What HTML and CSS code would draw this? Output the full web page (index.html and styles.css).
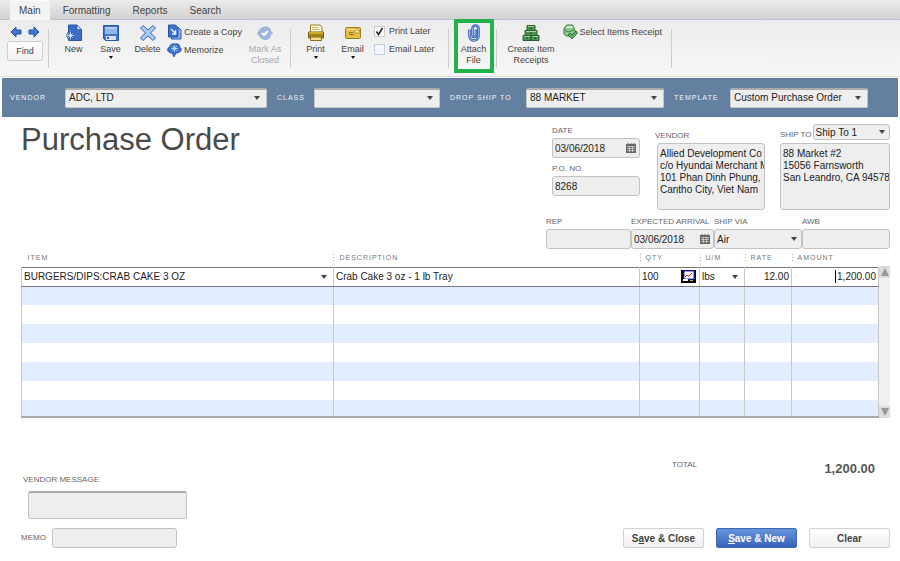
FILE: index.html
```html
<!DOCTYPE html>
<html lang="en">

<head>
    <meta charset="UTF-8">
    <meta name="viewport" content="width=device-width, initial-scale=1.0">
    <title>Purchase Order</title>
    <link rel="stylesheet" href="styles.css">
</head>

<body>

    <nav class="tabs">
        <button class="tab active" type="button">Main</button>
        <button class="tab" type="button">Formatting</button>
        <button class="tab" type="button">Reports</button>
        <button class="tab" type="button">Search</button>
    </nav>

    <div class="ribbon">

        <div class="find-group">
            <div class="arrows">
                <button class="arrow" type="button" aria-label="Previous">
                    <svg width="12" height="12" viewBox="0 0 12 12"><path d="M1 6 6 1v3h5v4H6v3z" fill="#3f78cc" stroke="#2450a0" stroke-linejoin="round"/></svg>
                </button>
                <button class="arrow" type="button" aria-label="Next">
                    <svg width="12" height="12" viewBox="0 0 12 12"><path d="M11 6 6 1v3H1v4h5v3z" fill="#3f78cc" stroke="#2450a0" stroke-linejoin="round"/></svg>
                </button>
            </div>
            <button class="find" type="button">Find</button>
        </div>

        <div class="divider"></div>

        <button class="tool" type="button">
            <svg width="18" height="18" viewBox="0 0 18 18">
                <path d="M3.500 1h8.500l4.500 4.500v11h-13z" fill="#3a6cc8" stroke="#2a56a8"/>
                <path d="M12 1v4.500h4.500z" fill="#c9dcf7" stroke="#2a56a8" stroke-width=".6"/>
                <path d="M5.500 7v9M1 11.500h9M2.500 8.500l6 6M8.500 8.500l-6 6" stroke="#2a56a8" stroke-width="2"/>
                <path d="M5.500 7.500v8M1.500 11.500h8M3 9l5 5M8 9l-5 5" stroke="#b9d7fb"/>
            </svg>
            New
        </button>
        <button class="tool" type="button">
            <svg width="18" height="18" viewBox="0 0 18 18">
                <path d="M1.500 1.500h15v15h-13l-2-2z" fill="#3c74d0" stroke="#2a56a8"/>
                <path d="M3 3h12v7H3z" fill="#8fb6ee"/>
                <path d="M3 3h12v2H3z" fill="#b3cff6"/>
                <path d="M4 12h10v4H4z" fill="#d6e5fa"/>
                <path d="M5 13h2v2H5z" fill="#2a56a8"/>
            </svg>
            Save
            <span class="caret"></span>
        </button>
        <button class="tool" type="button">
            <svg width="18" height="18" viewBox="0 0 18 18"><path d="M4 1.500 9 6l5-4.500L16.500 4l-5 5 5 5-2.500 2.500L9 12l-5 4.500L1.500 14l5-5-5-5z" fill="#a9c9f5" stroke="#3a62b4" stroke-linejoin="round"/></svg>
            Delete
        </button>

        <div class="stack">
            <button class="row-tool" type="button">
                <svg width="15" height="16" viewBox="0 0 15 16">
                    <path d="M4.500 3.500h7l2.500 2.500v9H4.500z" fill="#8fb5ee" stroke="#2a56a8"/>
                    <path d="M1.500 1h7L11 3.500V13H1.500z" fill="#3a72cc" stroke="#2a56a8"/>
                    <path d="m4 5 4 4M8.500 6v4H5" fill="none" stroke="#e4effd" stroke-width="1.500"/>
                </svg>
                Create a Copy
            </button>
            <button class="row-tool" type="button">
                <svg width="15" height="16" viewBox="0 0 15 16">
                    <path d="M2 10C0 9 0 6 2.500 5 3 2 6 1 8 2c3-1 5 1 5 3.500 2 1 1.500 4-.5 4.500-1 1-2.500 1-3.500 1L7 15l-2-4C4 11 2.500 11 2 10z" fill="#3a72cc" stroke="#2a56a8" stroke-width=".8"/>
                    <path d="M7.500 3v7M4 6.500h7M5 4l5 5M10 4 5 9" stroke="#cfe2fc" stroke-width=".8"/>
                </svg>
                Memorize
            </button>
        </div>

        <button class="tool" type="button" disabled>
            <svg width="18" height="18" viewBox="0 0 18 18">
                <path d="M1 9c2-2 3-6 8-6.500C13 2 15 5 15 7l2 2-2 2c0 3-3 5-6 5-4 0-6-4-8-7z" fill="#9db6e0"/>
                <path d="m6 9 2 2 4-4" fill="none" stroke="#fff" stroke-width="2"/>
            </svg>
            Mark As<br>Closed
        </button>

        <div class="divider"></div>

        <button class="tool" type="button">
            <svg width="18" height="18" viewBox="0 0 18 18">
                <path d="M3.500 1h9.500l2 2v6H3.500z" fill="#fffbe6" stroke="#9a7c1c"/>
                <path d="M5 3.500h6M5 5.500h7" stroke="#c6b36a"/>
                <path d="M1.500 8h15v6h-15z" fill="#a37f18" stroke="#7c5f10"/>
                <path d="M2 8h14v2H2z" fill="#d0ac3a"/>
                <path d="M3.500 13h11v3.500h-11z" fill="#f1dd8c" stroke="#8f701a"/>
            </svg>
            Print
            <span class="caret"></span>
        </button>
        <button class="tool" type="button">
            <svg width="18" height="18" viewBox="0 0 18 18">
                <rect x="1.500" y="3.500" width="15" height="11" rx="1" fill="#e3bd45" stroke="#a07d1c"/>
                <path d="M3 5h11v1H3z" fill="#f7e29a"/>
                <path d="M11 6h4v3h-4z" fill="#fff3bd" stroke="#a07d1c" stroke-width=".7"/>
                <path d="M5 8.500h4M5 10.500h5" stroke="#96741a"/>
            </svg>
            Email
            <span class="caret"></span>
        </button>

        <div class="checks">
            <label class="check"><input type="checkbox" checked> Print Later</label>
            <label class="check"><input type="checkbox"> Email Later</label>
        </div>

        <div class="divider"></div>

        <button class="tool attach" type="button">
            <svg width="18" height="18" viewBox="0 0 18 18">
                <path d="M4.500 5.500V12c0 6 9 6 9 0V4.500c0-4-6-4-6 0V11c0 2.500 3.500 2.500 3.500 0V5.500" fill="none" stroke="#2f5cae" stroke-width="2.600"/>
                <path d="M4.500 5.500V12c0 6 9 6 9 0V4.500c0-4-6-4-6 0V11c0 2.500 3.500 2.500 3.500 0V5.500" fill="none" stroke="#8fb8f2"/>
            </svg>
            Attach<br>File
        </button>

        <div class="divider"></div>

        <button class="tool receipts" type="button">
            <svg width="18" height="18" viewBox="0 0 18 18">
                <path d="M5 1.500h8v5H5zM3 6.500h12v5H3zM1 11.500h8v5H1zM9 11.500h8v5H9z" fill="#4c9153" stroke="#28602e"/>
                <path d="M6 2h6v1H6zM4 7h10v1H4zM2 12h6v1H2zM10 12h6v1h-6z" fill="#a5d6a4"/>
                <path d="M8 3h2v2H8zM8 8h2v2H8zM4 13h2v2H4zM12 13h2v2h-2z" fill="#2c6a33"/>
            </svg>
            Create Item<br>Receipts
        </button>

        <div class="stack last">
            <button class="row-tool" type="button">
                <svg width="15" height="16" viewBox="0 0 15 16">
                    <path d="M3.500 1h6L11 4l1 2v6H3l-2-2V5z" fill="#8ccb8e" stroke="#3c7d42"/>
                    <path d="M4 2h5l1 2H3z" fill="#d3efd0"/>
                    <path d="m1 5 4 3 6-2" fill="none" stroke="#3c7d42"/>
                    <path d="m5 11 2-2 2 2 4-4 1.500 2L9 15z" fill="#5fae64" stroke="#2c6a33" stroke-width=".9"/>
                </svg>
                Select Items Receipt
            </button>
        </div>

        <div class="divider"></div>

    </div>

    <div class="order-bar">
        <label for="vendor">VENDOR</label>
        <select id="vendor" class="select"><option>ADC, LTD</option></select>
        <label for="class">CLASS</label>
        <select id="class" class="select"><option></option></select>
        <label for="drop">DROP SHIP TO</label>
        <select id="drop" class="select"><option>88 MARKET</option></select>
        <label for="template">TEMPLATE</label>
        <select id="template" class="select"><option>Custom Purchase Order</option></select>
    </div>

    <main class="order">

        <div class="order-head">
            <h1>Purchase Order</h1>

            <div class="date-col">
                <label class="label" for="date">DATE</label>
                <div class="date-field">
                    <input id="date" class="field" type="text" value="03/06/2018">
                    <svg class="calendar" width="10" height="10" viewBox="0 0 10 10"><path d="M0 1h10v9H0z" fill="#666"/><path d="M2 0v2M5 0v2M8 0v2" stroke="#666"/><path d="M1 3.500h8M1 5.500h8M1 7.500h8M3.500 3v6M6.500 3v6" stroke="#ddd" stroke-width=".7"/></svg>
                </div>
                <label class="label" for="po">P.O. NO.</label>
                <input id="po" class="field" type="text" value="8268">
            </div>

            <div class="vendor-col">
                <label class="label" for="vendor-address">VENDOR</label>
                <textarea id="vendor-address" class="field address" wrap="off">Allied Development Co
c/o Hyundai Merchant M
101 Phan Dinh Phung,
Cantho City, Viet Nam</textarea>
            </div>

            <div class="ship-col">
                <div class="ship-top">
                    <label class="label" for="ship">SHIP TO</label>
                    <select id="ship" class="select flat"><option>Ship To 1</option></select>
                </div>
                <textarea class="field address" wrap="off" aria-label="Ship to address">88 Market #2
15056 Farnsworth
San Leandro, CA 94578</textarea>
            </div>
        </div>

        <div class="shipping">
            <div>
                <label class="label" for="rep">REP</label>
                <input id="rep" class="field" type="text">
            </div>
            <div>
                <label class="label" for="arrival">EXPECTED ARRIVAL</label>
                <div class="date-field">
                    <input id="arrival" class="field" type="text" value="03/06/2018">
                    <svg class="calendar" width="10" height="10" viewBox="0 0 10 10"><path d="M0 1h10v9H0z" fill="#666"/><path d="M2 0v2M5 0v2M8 0v2" stroke="#666"/><path d="M1 3.500h8M1 5.500h8M1 7.500h8M3.500 3v6M6.500 3v6" stroke="#ddd" stroke-width=".7"/></svg>
                </div>
            </div>
            <div>
                <label class="label" for="via">SHIP VIA</label>
                <select id="via" class="select flat"><option>Air</option></select>
            </div>
            <div>
                <label class="label" for="awb">AWB</label>
                <input id="awb" class="field" type="text">
            </div>
        </div>

        <div class="items-wrap">
            <table class="items">
                <colgroup>
                    <col class="c-item"><col><col class="c-qty"><col class="c-um"><col class="c-rate"><col class="c-amount">
                </colgroup>
                <thead>
                    <tr>
                        <th>ITEM</th>
                        <th>DESCRIPTION</th>
                        <th>QTY</th>
                        <th>U/M</th>
                        <th>RATE</th>
                        <th>AMOUNT</th>
                    </tr>
                </thead>
                <tbody>
                    <tr class="current">
                        <td><select class="cell" aria-label="Item"><option>BURGERS/DIPS:CRAB CAKE 3 OZ</option></select></td>
                        <td><input class="cell" type="text" value="Crab Cake 3 oz - 1 lb Tray" aria-label="Description"></td>
                        <td>
                            <div class="qty">
                                <input class="cell" type="text" value="100" aria-label="Quantity">
                                <button class="chart" type="button" aria-label="Availability">
                                    <svg width="15" height="13" viewBox="0 0 15 13"><path d="M0 0h15v13H0z"/><path d="M3 1h10v8H3z" fill="#fff" stroke="#2433d8"/><path d="m4 7 2-2 2 1 3-3" fill="none" stroke="#e02020"/><path d="M2 9h5v2H2z" fill="#fff"/><path d="M9 10h3v1H9z" fill="#d8c020"/></svg>
                                </button>
                            </div>
                        </td>
                        <td><select class="cell" aria-label="Unit"><option>lbs</option></select></td>
                        <td><input class="cell number" type="text" value="12.00" aria-label="Rate"></td>
                        <td>
                            <div class="amount">
                                <span class="cursor"></span>
                                <input class="cell number" type="text" value="1,200.00" aria-label="Amount">
                            </div>
                        </td>
                    </tr>
                    <tr><td></td><td></td><td></td><td></td><td></td><td></td></tr>
                    <tr><td></td><td></td><td></td><td></td><td></td><td></td></tr>
                    <tr><td></td><td></td><td></td><td></td><td></td><td></td></tr>
                    <tr><td></td><td></td><td></td><td></td><td></td><td></td></tr>
                    <tr><td></td><td></td><td></td><td></td><td></td><td></td></tr>
                    <tr><td></td><td></td><td></td><td></td><td></td><td></td></tr>
                    <tr class="last"><td></td><td></td><td></td><td></td><td></td><td></td></tr>
                </tbody>
            </table>
            <div class="scrollbar">
                <button type="button" aria-label="Scroll up"><svg width="8" height="8" viewBox="0 0 8 8"><path d="M4 0l4 8H0z" fill="#999"/></svg></button>
                <button type="button" aria-label="Scroll down"><svg width="8" height="8" viewBox="0 0 8 8"><path d="M4 8l4-8H0z" fill="#999"/></svg></button>
            </div>
        </div>

        <div class="order-foot">
            <div class="notes">
                <label class="label message-label" for="message">VENDOR MESSAGE</label>
                <textarea id="message" class="field message"></textarea>
                <div class="memo">
                    <label class="label" for="memo">MEMO</label>
                    <input id="memo" class="field" type="text">
                </div>
            </div>
            <div class="summary">
                <div class="total">
                    <span class="label">TOTAL</span>
                    <strong>1,200.00</strong>
                </div>
                <div class="actions">
                    <button class="btn" type="button">S<u>a</u>ve &amp; Close</button>
                    <button class="btn primary" type="button"><u>S</u>ave &amp; New</button>
                    <button class="btn" type="button">Clear</button>
                </div>
            </div>
        </div>

    </main>

</body>

</html>
```
FILE: styles.css
```css
* {
    box-sizing: border-box;
}

body {
    margin: 0;
    background: #fff;
    color: #222;
    font-family: "Liberation Sans", Arial, sans-serif;
    font-size: 10px;
}

button, input, select, textarea {
    margin: 0;
    padding: 0;
    border: 0;
    background: none;
    color: inherit;
    font: inherit;
}

svg {
    display: block;
    flex: none;
}

/* tabs */

.tabs {
    display: flex;
    gap: 4px;
    height: 20px;
    padding-left: 10px;
    background: linear-gradient(#ececec, #d2d2d2);
    border-bottom: 1px solid #bcc5d6;
}

.tab {
    height: 20px;
    padding: 0 9px;
    border: 1px solid transparent;
    border-width: 1px 0 0;
    color: #444;
}

.tab.active {
    background: #f3f3f3;
    border-color: #fafafa;
    border-radius: 3px 3px 0 0;
}

/* ribbon */

.ribbon {
    display: flex;
    align-items: flex-start;
    height: 57px;
    margin-bottom: 1px;
    padding: 4px 7px 0;
    background: linear-gradient(#ececec, #f7f7f7);
    border-bottom: 1px solid #dcdcdc;
    color: #444;
    font-size: 9px;
    line-height: 11px;
}

.find-group {
    width: 36px;
}

.arrows {
    display: flex;
    justify-content: space-between;
    padding: 2px 3px 3px;
}

.find {
    width: 36px;
    height: 20px;
    background: linear-gradient(#fff, #f0f0f0);
    border: 1px solid #cfcfcf;
    border-radius: 2px;
}

.divider {
    width: 1px;
    height: 39px;
    margin: 5px 6px 0 5px;
    background: #cdcdcd;
}

.tool {
    display: flex;
    flex-direction: column;
    align-items: center;
    min-width: 37px;
    line-height: 11px;
}

.tool svg {
    margin-bottom: 2px;
}

.tool:disabled {
    min-width: 40px;
    color: #a8a8a8;
}

.caret {
    margin-top: 1px;
    border: 2px solid transparent;
    border-top: 3px solid #111;
    border-bottom: 0;
}

.stack {
    display: flex;
    flex-direction: column;
    gap: 2px;
    padding: 0 3px 0 1px;
}

.stack.last {
    padding: 0 4px 0 3px;
}

.row-tool {
    display: flex;
    align-items: center;
    gap: 2px;
    height: 16px;
    white-space: nowrap;
}

.checks {
    display: flex;
    flex-direction: column;
    gap: 6px;
    padding: 1px 8px 0 3px;
}

.check {
    display: flex;
    align-items: center;
    gap: 4px;
    height: 12px;
    white-space: nowrap;
}

.check input {
    appearance: none;
    width: 11px;
    height: 11px;
    background: #f4f7fd;
    border: 1px solid #c3cbe0;
}

.check input:checked {
    background: #fafafa url("data:image/svg+xml,%3Csvg xmlns='http://www.w3.org/2000/svg' viewBox='0 0 9 9'%3E%3Cpath d='M1.500 4.500 3.500 7.500 7.500 1' fill='none' stroke='%23222' stroke-width='1.500'/%3E%3C/svg%3E");
    border-color: #ccc;
}

.attach {
    width: 40px;
    height: 54px;
    margin: -5px -3px 0 -1px;
    padding-top: 1px;
    border: 4px solid #22b14c;
}

.receipts {
    min-width: 57px;
}

/* blue bar */

.order-bar {
    display: grid;
    grid-template-columns: 45px 202fr 27px 126fr 66px 138fr 46px 138fr;
    align-items: center;
    gap: 10px;
    height: 39px;
    margin: 0 2px;
    padding: 0 30px 0 8px;
    background: #6480a1;
    border: 1px solid #5a789b;
    border-width: 1px 0;
    color: #f0f4f8;
    font-size: 7px;
    letter-spacing: 1px;
    white-space: nowrap;
}

.select {
    appearance: none;
    width: 100%;
    height: 20px;
    padding: 0 18px 2px 3px;
    background: #eee url("data:image/svg+xml,%3Csvg xmlns='http://www.w3.org/2000/svg' width='6' height='4'%3E%3Cpath d='M0 0h6L3 4z' fill='%23444'/%3E%3C/svg%3E") no-repeat right 6px center;
    border: 1px solid #c6c6c6;
    border-top: 2px solid #aaa;
    border-radius: 2px;
    color: #222;
    font-size: 10px;
    letter-spacing: normal;
}

.select.flat {
    padding: 0 14px 0 2px;
    background-position: right 4px center;
    border: 1px solid #c2c2c2;
    border-radius: 3px;
}

/* form */

.order {
    padding: 6px 10px 0 21px;
}

.order-head {
    display: flex;
    align-items: flex-start;
}

h1 {
    flex: 1;
    margin: 0;
    color: #4a4a4a;
    font-size: 31px;
    font-weight: normal;
    line-height: 34px;
}

.label {
    display: block;
    color: #666;
    font-size: 8px;
    line-height: 10px;
    white-space: nowrap;
}

.field {
    display: block;
    width: 100%;
    height: 20px;
    padding: 0 2px;
    background: #eee;
    border: 1px solid #c2c2c2;
    border-radius: 3px;
}

.date-col {
    width: 88px;
    margin-right: 15px;
    padding-top: 3px;
}

.date-col .label {
    padding-bottom: 2px;
}

.date-field {
    position: relative;
}

.date-col .date-field {
    margin-bottom: 6px;
}

.calendar {
    position: absolute;
    top: 5px;
    right: 4px;
}

.vendor-col {
    width: 110px;
    margin-right: 15px;
    padding-top: 8px;
}

.vendor-col .address {
    width: 108px;
    margin: 2px 0 0 2px;
}

.ship-col {
    width: 110px;
}

.ship-top {
    display: flex;
    align-items: flex-end;
    gap: 1px;
    margin-bottom: 3px;
    padding-top: 1px;
}

.ship-top .select {
    flex: 1;
    height: 16px;
    min-width: 0;
}

.address {
    height: 67px;
    padding: 4px 0 0 2px;
    line-height: 12px;
    resize: none;
    overflow: hidden;
}

.shipping {
    display: grid;
    grid-template-columns: 85px 83px 88px 88px;
    justify-content: end;
    margin-top: 7px;
}

.shipping .label {
    padding-bottom: 2px;
}

.shipping .select {
    display: block;
}

/* items */

.items-wrap {
    display: flex;
}

.items {
    flex: 1;
    table-layout: fixed;
    width: 100%;
    border-collapse: collapse;
}

.c-item { width: 36.4%; }
.c-qty { width: 60px; }
.c-um { width: 45px; }
.c-rate { width: 47px; }
.c-amount { width: 87px; }

.items th {
    height: 18px;
    padding: 0 0 0 6px;
    background: repeating-linear-gradient(#aaa 0 1px, transparent 1px 3px) no-repeat left 5px / 1px 8px;
    color: #777;
    font-size: 7px;
    font-weight: normal;
    letter-spacing: 1px;
    text-align: left;
}

.items th:first-child {
    background: none;
}

.items td {
    height: 19px;
    padding: 0;
    border: 1px solid #c8c8c8;
    border-width: 0 1px;
}

.items tbody tr:nth-child(even) {
    background: #e2edff;
}

.items .current td {
    border-top: 1px solid #777;
    border-bottom: 1px solid #777;
}

.items .last td {
    height: 17px;
    border-bottom: 2px solid #aaa;
}

.cell {
    display: block;
    appearance: none;
    width: 100%;
    height: 18px;
    padding: 0 2px;
}

select.cell {
    background: url("data:image/svg+xml,%3Csvg xmlns='http://www.w3.org/2000/svg' width='6' height='4'%3E%3Cpath d='M0 0h6L3 4z' fill='%23444'/%3E%3C/svg%3E") no-repeat right 6px center;
}

.number {
    text-align: right;
}

.qty {
    display: flex;
    align-items: center;
    padding-right: 3px;
}

.qty .cell {
    min-width: 0;
}

.amount {
    display: flex;
    align-items: center;
    justify-content: flex-end;
}

.amount .cell {
    width: 42px;
    padding-left: 0;
}

.cursor {
    width: 1px;
    height: 13px;
    background: #000;
}

.scrollbar {
    display: flex;
    flex-direction: column;
    justify-content: space-between;
    width: 11px;
    margin-top: 17px;
    background: #f0f0f0;
}

.scrollbar button {
    display: flex;
    align-items: center;
    justify-content: center;
    height: 12px;
    background: #dcdcdc;
}

/* footer */

.order-foot {
    display: flex;
    justify-content: space-between;
}

.notes {
    padding-top: 57px;
}

.message-label {
    padding-left: 2px;
}

.message {
    width: 159px;
    height: 28px;
    margin: 6px 0 9px 7px;
    border-top: 2px solid #aaa;
    resize: none;
}

.memo {
    display: flex;
    align-items: center;
    gap: 6px;
}

.memo .field {
    width: 125px;
}

.summary {
    display: flex;
    flex-direction: column;
    justify-content: space-between;
    padding-top: 42px;
}

.total {
    display: flex;
    justify-content: space-between;
    padding: 0 15px 0 49px;
    color: #555;
}

.total strong {
    font-size: 13px;
    line-height: 18px;
}

.actions {
    display: flex;
    gap: 12px;
}

.btn {
    width: 81px;
    height: 20px;
    background: linear-gradient(#fff, #f0f0f0);
    border: 1px solid #d2d2d2;
    border-radius: 2px;
    color: #444;
    font-weight: bold;
}

.btn.primary {
    background: linear-gradient(#6595db, #3a63bd);
    border-color: #3f68b4;
    color: #fff;
}
```
